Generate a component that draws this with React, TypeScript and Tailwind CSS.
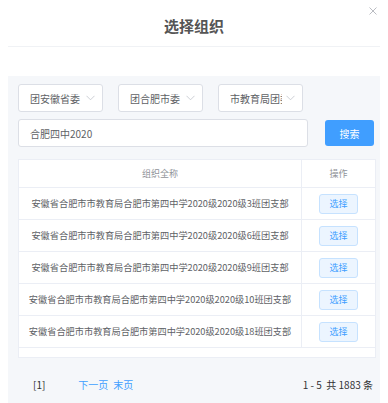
import React from "react";

const rows = [
  "安徽省合肥市市教育局合肥市第四中学2020级2020级3班团支部",
  "安徽省合肥市市教育局合肥市第四中学2020级2020级6班团支部",
  "安徽省合肥市市教育局合肥市第四中学2020级2020级9班团支部",
  "安徽省合肥市市教育局合肥市第四中学2020级2020级10班团支部",
  "安徽省合肥市市教育局合肥市第四中学2020级2020级18班团支部",
];

const Chevron = () => (
  <svg width="9" height="6" viewBox="0 0 9 6" fill="none" className="shrink-0">
    <path d="M0.5 0.8L4.5 4.8L8.5 0.8" stroke="#c0c4cc" strokeWidth="0.8" />
  </svg>
);

const Select = ({ label }: { label: string }) => (
  <div className="w-[85px] h-[28px] bg-white border border-[#dcdfe6] rounded-[3px] flex items-center pl-[11px] pr-[7px] gap-[4px]">
    <span className="flex-1 overflow-hidden whitespace-nowrap text-[10px] text-[#606266]">{label}</span>
    <Chevron />
  </div>
);

export default function App() {
  return (
    <div
      className="w-[388px] h-[403px] bg-white relative overflow-hidden"
      style={{ fontFamily: '"Noto Sans CJK SC", "Noto Sans", sans-serif' }}
    >
      <button className="absolute right-[11px] top-[7px]">
        <svg width="8" height="8" viewBox="0 0 8 8">
          <path d="M0.5 0.5L7.5 7.5M7.5 0.5L0.5 7.5" stroke="#a8abb2" strokeWidth="0.8" />
        </svg>
      </button>
      <div className="mx-2 h-[47px] border-b border-[#f0f2f5] flex items-center justify-center pt-[6px]">
        <h1 className="text-[15px] font-bold text-[#555]">选择组织</h1>
      </div>
      <div className="mx-2 mt-[29px] bg-[#f5f7fa] pl-[10px] pr-[4px] pt-2 h-[330px]">
        <div className="flex gap-[15px]">
          <Select label="团安徽省委" />
          <Select label="团合肥市委" />
          <Select label="市教育局团委" />
        </div>
        <div className="flex items-center mt-[7px] gap-[17px]">
          <div className="w-[290px] h-[28px] bg-white border border-[#dcdfe6] rounded-[3px] flex items-center pl-[11px] text-[10px] text-[#606266]">
            合肥四中2020
          </div>
          <button className="w-[49px] h-[26px] bg-[#409eff] rounded-[3px] text-white text-[10px]">搜索</button>
        </div>
        <div className="mt-[12px] bg-white border border-[#ebeef5] h-[199px]">
          <div className="flex h-[28px] border-b border-[#ebeef5] text-[9px] text-[#909399]">
            <div className="w-[283px] border-r border-[#ebeef5] flex items-center justify-center">组织全称</div>
            <div className="flex-1 flex items-center justify-center">操作</div>
          </div>
          {rows.map((r) => (
            <div key={r} className="flex h-[32px] border-b border-[#ebeef5] text-[9.2px] text-[#606266]">
              <div className="w-[283px] border-r border-[#ebeef5] flex items-center justify-center whitespace-nowrap">{r}</div>
              <div className="flex-1 flex items-center justify-center">
                <button className="w-[39px] h-[20px] bg-[#ecf5ff] border border-[#c6e2ff] rounded-[3px] text-[#409eff] text-[9px]">选择</button>
              </div>
            </div>
          ))}
        </div>
        <div className="flex items-center h-[26px] mt-[13px] text-[10px]">
          <span className="ml-[15px] text-[#303133]">[1]</span>
          <span className="ml-[33px] text-[#409eff]">下一页</span>
          <span className="ml-[5px] text-[#409eff]">末页</span>
          <span className="ml-auto mr-[3px] text-[#303133] whitespace-pre">1 - 5  共 1883 条</span>
        </div>
      </div>
    </div>
  );
}
